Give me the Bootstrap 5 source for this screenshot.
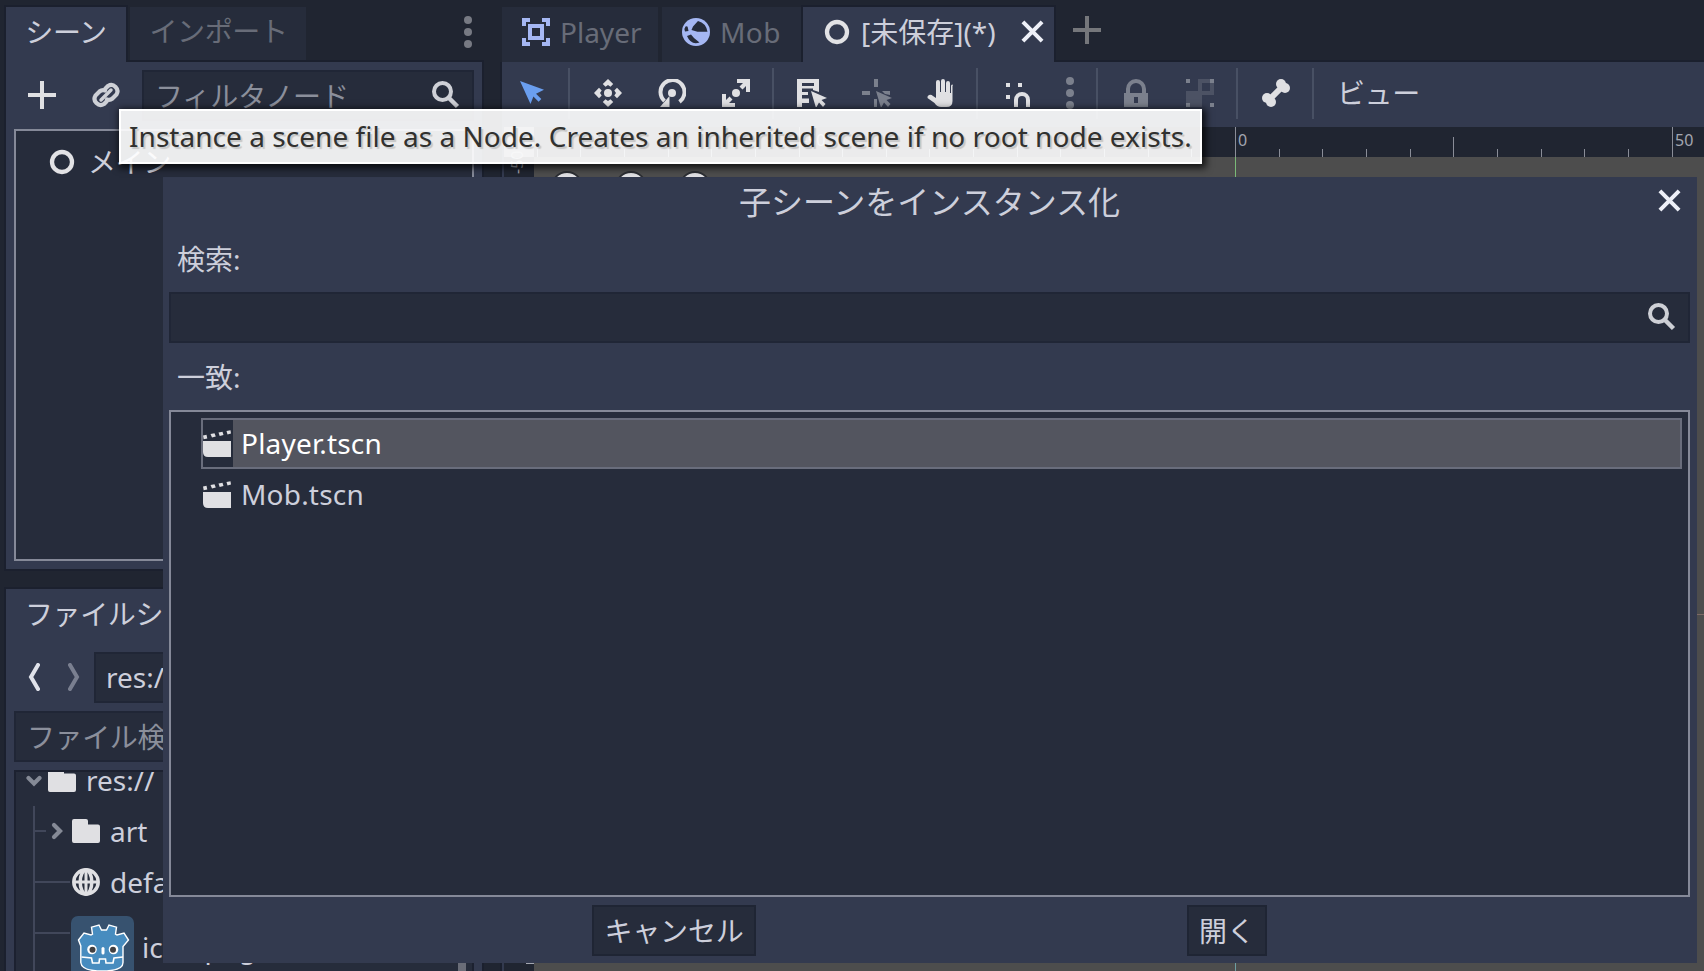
<!DOCTYPE html>
<html lang="ja">
<head>
<meta charset="utf-8">
<title>子シーンをインスタンス化</title>
<meta name="viewport" content="width=device-width, initial-scale=1">
<link href="https://cdn.jsdelivr.net/npm/bootstrap@5.3.0/dist/css/bootstrap.min.css" rel="stylesheet">
<style>
:root{--base:#333a4f;--dark:#262c3b;--darker:#202531;--edge:#1b202e;--line:#858998;--ink:#cdcfdb;--icon:#e0e0e3}
html,body{height:100%}
body{background:var(--darker);color:var(--ink);font-family:"Noto Sans","Noto Sans CJK JP",sans-serif;font-size:28px;line-height:40px;overflow:hidden;white-space:nowrap}
svg{display:block;flex:none;fill:var(--icon)}
.kana{letter-spacing:-.4px}
.editor{width:1704px;height:971px;padding-left:4px;gap:16px;overflow:hidden}
.docks{width:480px;flex:none}
.tabrow{height:62px;padding-top:5px;position:relative;z-index:1;flex:none}
.etab{height:55px;margin-top:2px;background:var(--dark);color:#686c78;padding-bottom:6px}
.etab.on{height:57px;margin-top:0;background:var(--base);color:var(--ink);border:2px solid var(--edge);border-bottom:0;padding-bottom:6px}
.tabrow .rest{height:57px;border-bottom:2px solid var(--edge)}
.under{height:53px}
.pane{background:var(--base);border:2px solid var(--edge);flex:none}
.scene{height:509px;border-top:0;padding:8px 8px 8px}
.field{background:var(--dark);border:2px solid #202636;height:51px}
.hint{color:#8b8f9b}
.outl{background:var(--dark);border:2px solid var(--line)}
.files{margin-top:16px;height:400px;padding:5px 8px 0}
.ftree{background:var(--dark);border:2px solid #1c2130;margin-top:8px;height:260px;overflow:hidden;position:relative}
.frow{height:51px}
.twig{position:absolute;background:#41475a}
.main{width:1184px}
.tools{background:var(--base);height:65px;padding-bottom:3px;border-left:2px solid var(--edge);flex:none}
.tool{width:64px}
.rule{width:2px;height:51px;background:#485064;margin:0 6px 0 4px}
.off{opacity:.42}
.view{border-left:2px solid var(--edge);height:844px}
.stage{background:var(--base);padding-left:2px}
.stage>svg{width:1200px;height:844px}
.tip{left:119px;top:109px;width:1083px;height:55px;background:rgba(255,255,255,.91);border:2px solid #fff;box-shadow:2px 2px 7px 2px rgba(0,0,0,.75);color:#31312f;text-shadow:2px 2px 1px rgba(0,0,0,.16);padding:6px 0 0 8px;line-height:38px;letter-spacing:.04px;z-index:5}
.dlg{left:163px;top:177px;width:1534px;height:786px;background:var(--base);padding:0 7px 7px 6px;z-index:4}
.dlg .ttl{font-size:32px;height:52px;line-height:50px}
.lbl{padding-left:8px;height:63px;line-height:60px}
.list{height:487px;padding:6px 6px}
.row-item{height:51px;margin-left:24px;border:2px solid transparent}
.row-item.sel{border-color:#696d7c;background:#53555f;color:#fff}
.row-item .ic{width:30px;height:47px;background:var(--dark);padding-bottom:1px}
.row-item span{margin:-2px 0 0 8px;letter-spacing:.2px}
.dbtn{background:var(--dark);border:2px solid #1f2534;border-radius:0;height:51px;color:var(--ink);font-size:28px;line-height:44px;padding:0}
</style>
</head>
<body>
<svg width="0" height="0" class="position-absolute" aria-hidden="true">
  <symbol id="lens" viewBox="0 0 28 28"><circle cx="10.5" cy="10.5" r="8.5" fill="none" stroke="#ced0d6" stroke-width="4"/><path d="M16 16l9.500 9.500" stroke="#ced0d6" stroke-width="4.500"/></symbol>
  <symbol id="node" viewBox="0 0 28 28"><circle cx="14" cy="14" r="10" fill="none" stroke="#e2e2e5" stroke-width="4.300"/></symbol>
  <symbol id="cross" viewBox="0 0 24 24"><path d="M2 2l20 20M22 2L2 22" stroke="#eef0f8" stroke-width="4.200"/></symbol>
  <symbol id="kebab" viewBox="0 0 8 32"><circle cx="4" cy="4" r="4"/><circle cx="4" cy="16" r="4"/><circle cx="4" cy="28" r="4"/></symbol>
  <symbol id="folder" viewBox="0 0 28 24"><path d="M2 0h12q2 0 2 2v3.500h10q2 0 2 2V22q0 2-2 2H2q-2 0-2-2V2q0-2 2-2z"/></symbol>
  <symbol id="clap" viewBox="0 0 28 28"><path d="M0 12h28v16H5q-5 0-5-5z"/><path d="M0 6.500l3.500-.7.8 3.600-3.600.8zM7.500 5l4-.8 1.300 3.300-3.800.9zM15.500 3.500l4-.8 1 3.400-3.800.9zM23.500 2l4-.8.500 3.400-3.500.9z"/></symbol>
</svg>

<div class="editor d-flex">
  <div class="docks d-flex flex-column">
    <div class="tabrow d-flex">
      <div class="etab on kana d-flex align-items-center justify-content-center" style="width:124px">シーン</div>
      <div class="rest flex-grow-1 d-flex">
        <div class="etab under kana d-flex align-items-center justify-content-center" style="width:176px;margin-left:2px;padding-left:1px">インポート</div>
        <svg class="ms-auto" style="margin:11px 12px 0 0;fill:#777a83" width="8" height="32"><use href="#kebab"/></svg>
      </div>
    </div>
    <div class="pane scene d-flex flex-column">
      <div class="d-flex">
        <svg style="margin:11px 0 0 14px" width="28" height="28"><path d="M12 0h4v12h12v4H16v12h-4V16H0v-4h12z"/></svg>
        <svg style="margin:11px 0 0 36px" width="28" height="28" viewBox="0 0 28 28"><g fill="none" stroke="#ced0d6" stroke-width="4.200" stroke-linecap="round"><path d="M13.500 7.500L16 5a6.200 6.200 0 0 1 8.500 8.500L20.500 17.500Q18 19.500 15 18.500"/><path d="M14.500 20.500L12 23a6.200 6.200 0 0 1-8.500-8.500L7.500 10.500Q10 8.500 13 9.500"/><path d="M9 19L19 9" stroke-width="3.500"/></g></svg>
        <div class="field flex-grow-1 d-flex hint" style="margin-left:22px;padding:4px 12px 0 11px;letter-spacing:-.1px">フィルタノード<svg class="ms-auto" style="margin-top:5px" width="28" height="28"><use href="#lens"/></svg></div>
      </div>
      <div class="outl flex-grow-1 d-flex" style="margin-top:8px;padding:11px 0 0 32px">
        <svg style="margin-top:6px" width="28" height="28"><use href="#node"/></svg>
        <span class="kana" style="margin-left:12px">メイン</span>
      </div>
    </div>
    <div class="pane files">
      <div class="kana" style="padding-left:11px">ファイルシステム</div>
      <div class="d-flex" style="margin-top:18px">
        <svg style="margin:11px 0 0 14px" width="12" height="28"><path d="M10 2L3 14l7 12" fill="none" stroke="#e0e2ea" stroke-width="4" stroke-linecap="round"/></svg>
        <svg style="margin:11px 0 0 28px" width="12" height="28"><path d="M2 2l7 12-7 12" fill="none" stroke="#7a7f90" stroke-width="4" stroke-linecap="round"/></svg>
        <div class="field flex-grow-1" style="margin-left:14px;padding:3px 0 0 10px">res://</div>
      </div>
      <div class="field hint kana" style="margin-top:8px;padding:4px 0 0 11px">ファイル検索</div>
      <div class="ftree">
        <i class="twig" style="left:17px;top:34px;width:2px;height:200px"></i>
        <i class="twig" style="left:18px;top:58px;width:12px;height:2px"></i>
        <i class="twig" style="left:18px;top:109px;width:36px;height:2px"></i>
        <i class="twig" style="left:18px;top:160px;width:36px;height:2px"></i>
        <div class="frow d-flex align-items-center" style="margin-top:-18px;padding-left:10px">
          <svg width="16" height="12" style="margin-top:2px"><path d="M2.500 3L8 8.500 13.500 3" fill="none" stroke="#858a96" stroke-width="4.200" stroke-linecap="round"/></svg>
          <svg style="margin:0 10px 0 6px" width="28" height="24"><use href="#folder"/></svg>res://
        </div>
        <div class="frow d-flex align-items-center" style="padding-left:35px">
          <svg width="12" height="18"><path d="M3 3l6 6-6 6" fill="none" stroke="#858a96" stroke-width="4.200" stroke-linecap="round"/></svg>
          <svg style="margin:0 10px 0 9px" width="28" height="24"><use href="#folder"/></svg>art
        </div>
        <div class="frow d-flex align-items-center" style="padding-left:56px">
          <svg style="margin-right:10px" width="28" height="28"><g fill="none" stroke="#e0e0e3" stroke-width="3.500"><circle cx="14" cy="14" r="12.200"/><ellipse cx="14" cy="14" rx="5.800" ry="12"/><path d="M2 14h24M14 2v24" stroke-width="3"/></g></svg>default_env.tres
        </div>
        <div class="d-flex align-items-center" style="padding-left:55px;height:64px;margin-top:8px">
          <svg style="margin:1px 8px 0 0" width="63" height="64" viewBox="0 0 63 64">
            <rect width="63" height="68" rx="7" fill="#37526f"/>
            <path d="M8.500 25l5.500-7 7 2 1.500-.8-1-7 7.500-2.200 2.500 5h5l2.500-5 7.500 2.200-1 7 1.500.8 7-2 4.500 7-5.500 6.500v16C53 55 42 56 32 56S11.500 55 10.800 47.500V31z" transform="translate(-1 -1)" fill="#478cbf" stroke="#fff" stroke-width="1.400"/>
            <path d="M10.500 41l10 1 1 5h6.500l.5-4h6l.5 4h7l1-5 9-1" fill="none" stroke="#fff" stroke-width="1.600"/>
            <circle cx="21" cy="33.500" r="4.800" fill="#fff"/><circle cx="42.500" cy="33.500" r="4.800" fill="#fff"/><circle cx="21.500" cy="33.800" r="3" fill="#414042"/><circle cx="42" cy="33.800" r="3" fill="#414042"/>
            <rect x="30.500" y="31" width="3" height="7.500" rx="1.500" fill="#fff"/>
          </svg>icon.png
        </div>
      </div>
    </div>
  </div>

  <div class="main flex-grow-1 d-flex flex-column">
    <div class="tabrow d-flex">
      <div class="etab d-flex align-items-center" style="width:156px;margin-left:2px;padding-left:20px">
        <svg style="margin-right:10px" width="28" height="28"><g fill="#a5b7f3"><path d="M0 0h8v4H4v4H0zM20 0h8v8h-4V4h-4zM0 20h4v4h4v4H0zM24 20h4v8h-8v-4h4z"/><path fill-rule="evenodd" d="M6 6h16v16H6zM10 10v8h8v-8z"/></g></svg>Player
      </div>
      <div class="etab d-flex align-items-center" style="width:139px;margin-left:4px;padding-left:20px">
        <svg style="margin-right:10px" width="28" height="28"><circle cx="14" cy="14" r="14" fill="#a5b7f3"/><path d="M16 3Q24 5 25.500 13.800H15.500L9.500 12 11 8.500zM3.500 8.500Q6 7.500 6 10.500L6.500 13 3 13.500Q1.500 11 3.500 8.500zM5 18l4-1.500L12 20l5.500 4.500Q9 27.500 5 18z" fill="#262c3b"/></svg><span style="letter-spacing:.4px">Mob</span>
      </div>
      <div class="etab on d-flex align-items-center" style="width:255px;padding-left:20px">
        <svg style="margin-right:10px" width="28" height="28"><use href="#node"/></svg>[未保存](*)
        <svg style="margin-left:auto;margin-right:10px" width="23" height="23"><use href="#cross"/></svg>
      </div>
      <div class="rest flex-grow-1">
        <svg style="margin:11px 0 0 17px;fill:#75777b" width="28" height="28"><path d="M12 0h4v12h12v4H16v12h-4V16H0v-4h12z"/></svg>
      </div>
    </div>

    <div class="tools d-flex align-items-center">
      <div class="tool d-flex justify-content-center" style="width:62px;padding-right:2px"><svg width="28" height="28"><path d="M2 2l24 8.800-8 4 5.300 5.300-2.700 2.700-5.200-5.200L12.500 25z" style="fill:#6a9eef"/></svg></div>
      <div class="rule"></div>
      <div class="tool d-flex justify-content-center"><svg width="28" height="28"><circle cx="14" cy="14" r="4"/><path d="M14 0l5.200 5-2.700 2.700L14 6l-2.500 1.700L8.800 5zM14 28l5.200-5-2.700-2.700L14 22l-2.500-1.700L8.800 23zM0 14l5-5.200 2.700 2.700L6 14l1.700 2.500L5 19.200zM28 14l-5-5.200-2.700 2.700L22 14l-1.700 2.500 2.700 2.700z"/></svg></div>
      <div class="tool d-flex justify-content-center"><svg width="28" height="28"><circle cx="14" cy="14" r="4"/><path d="M6.500 22A12 12 0 1 1 21.500 22.800" fill="none" stroke="#e0e0e3" stroke-width="4"/><path d="M11.500 17v11H2z"/></svg></div>
      <div class="tool d-flex justify-content-center"><svg width="28" height="28"><circle cx="14" cy="14" r="4"/><path d="M15 0h13v13h-4V7l-3.500 3.500-3-3L21 4h-6zM0 15h4v6l3.500-3.500 3 3L7 24h6v4H0z"/></svg></div>
      <div class="rule"></div>
      <div class="tool d-flex justify-content-center"><svg width="30" height="28" viewBox="0 0 30 28"><path d="M0 0h22v13l-6-2v-1.500H5V13h6v3H5v3.500h7V24H5v4H0zM5 4v3h12V4z" fill-rule="evenodd"/><path d="M14 12l16 7-5.500 2 4 4-2.500 3-4-4.500L19 29z"/></svg></div>
      <div class="tool d-flex justify-content-center" style="padding-left:2px"><svg class="off" width="30" height="28"><path d="M12 0h4v8h-4zM0 12h8v4H0zM20 12h8v4l-5-1zM12 20h3v8h-3z"/><path d="M14 12l16 7-5.500 2 4 4-2.500 3-4-4.500L19 29z"/></svg></div>
      <div class="tool d-flex justify-content-center"><svg width="28" height="28"><path d="M10 3q0-2 2-2t2 2v10h1V2q0-2 2-2t2 2v11h1V4q0-2 2-2t2 2v10h1V7q0-1.500 1.300-1.500T26.500 7v15q0 6-6 6H15q-4 0-6.500-4L1.500 19Q1 17 3 16t4 1l3 2z"/></svg></div>
      <div class="rule"></div>
      <div class="tool d-flex justify-content-center" style="width:66px;padding-left:3px"><svg width="28" height="28"><path d="M1 4h4v4H1zM13 4h4v4h-4zM1 16h4v4H1zM9 28v-7a8 8 0 0 1 16 0v7h-4v-7a4 4 0 0 0-8 0v7z"/></svg></div>
      <div class="d-flex justify-content-center off" style="width:42px;padding-right:2px"><svg width="8" height="32"><use href="#kebab"/></svg></div>
      <div class="rule"></div>
      <div class="tool d-flex justify-content-center"><svg class="off" width="28" height="28"><path fill-rule="evenodd" d="M4 14v-4a10 10 0 0 1 20 0v4h2v14H2V14zM8 14h12v-4a6 6 0 0 0-12 0zM12 18v6h4v-6z"/></svg></div>
      <div class="tool d-flex justify-content-center"><svg class="off" width="28" height="28"><path d="M0 0h4v4H0zM24 0h4v4h-4zM0 24h4v4H0zM24 24h4v4h-4z"/><path opacity=".35" fill-rule="evenodd" d="M12 0h12v4h4v12H16v12H4v-4H0V12h12zM16 4v8h8V4z"/></svg></div>
      <div class="rule"></div>
      <div class="tool d-flex justify-content-center"><svg width="28" height="28"><circle cx="19" cy="5" r="5"/><circle cx="23" cy="9" r="5"/><circle cx="5" cy="19" r="5"/><circle cx="9" cy="23" r="5"/><path d="M7.500 20.500l13-13" stroke="#e0e0e3" stroke-width="6"/></svg></div>
      <div class="rule"></div>
      <span class="kana" style="margin-left:17px">ビュー</span>
    </div>

    <div class="view"><div class="stage">
      <svg viewBox="504 127 1200 844" font-size="16" font-family="Noto Sans">
        <rect x="504" y="127" width="1200" height="844" fill="#202531"/>
        <rect x="534" y="157" width="1170" height="814" fill="#4d4d4d"/>
        <rect x="504" y="127" width="30" height="30" fill="#777b86"/>
        <g id="ticks" fill="#8a8d98"></g>
        <g fill="#a3a6b0"><text x="1238" y="146">0</text><text x="1675" y="146">50</text><text x="802" y="146">-50</text><text transform="translate(523 174) rotate(-90)">-50</text></g>
        <path d="M1235.500 157v400" stroke="#7aba78"/><path d="M1235.500 960v11" stroke="#6d9fa3"/>
        <path d="M1690 614.500h14" stroke="#7d6a66"/>
        <path d="M526 963.500h8" stroke="#a3a6b0"/>
        <g fill="#e0e0e3" stroke="#2c2e33" stroke-width="2"><circle cx="567" cy="187" r="15"/><circle cx="631" cy="187" r="15"/><circle cx="695" cy="187" r="15"/></g>
      </svg>
    </div></div>
  </div>
</div>
<svg class="position-absolute" style="left:458px;top:963px;z-index:3" width="8" height="8"><rect width="8" height="8" fill="#6a6d78"/></svg>

<div class="tip position-absolute"><span>Instance a scene file as a Node. Creates an inherited scene if no root node exists.</span></div>

<div class="dlg position-absolute d-flex flex-column">
  <div class="ttl text-center position-relative">子シーンをインスタンス化
    <svg class="position-absolute" style="right:9px;top:12px" width="23" height="23"><use href="#cross"/></svg>
  </div>
  <div class="lbl">検索:</div>
  <div class="field d-flex align-items-center justify-content-end" style="padding:0 12px 2px 0"><svg width="28" height="28"><use href="#lens"/></svg></div>
  <div class="lbl" style="height:67px;padding-top:4px">一致:</div>
  <div class="outl list flex-shrink-0">
    <div class="row-item sel d-flex align-items-center"><div class="ic d-flex align-items-center"><svg width="28" height="28"><use href="#clap"/></svg></div><span>Player.tscn</span></div>
    <div class="row-item d-flex align-items-center"><div class="ic d-flex align-items-center"><svg width="28" height="28"><use href="#clap"/></svg></div><span>Mob.tscn</span></div>
  </div>
  <div class="d-flex" style="padding-top:8px">
    <button class="btn dbtn" style="width:164px;margin-left:423px;letter-spacing:-.2px">キャンセル</button>
    <button class="btn dbtn" style="width:80px;margin-left:431px">開く</button>
  </div>
</div>
<script src="https://cdn.jsdelivr.net/npm/bootstrap@5.3.0/dist/js/bootstrap.bundle.min.js"></script>
<script>
// Ruler ticks: one every 5 units, a taller one at 25, full height at 50
let out = '';
for (let i = -16; i <= 10; i++) {
  const x = Math.round(1235 + i * 43.65), h = i % 10 === 0 ? 30 : i % 5 === 0 ? 20 : 8;
  out += `<rect x="${x}" y="${157 - h}" width="1" height="${h}"/>`;
}
document.getElementById('ticks').innerHTML = out;
</script>
</body>
</html>
